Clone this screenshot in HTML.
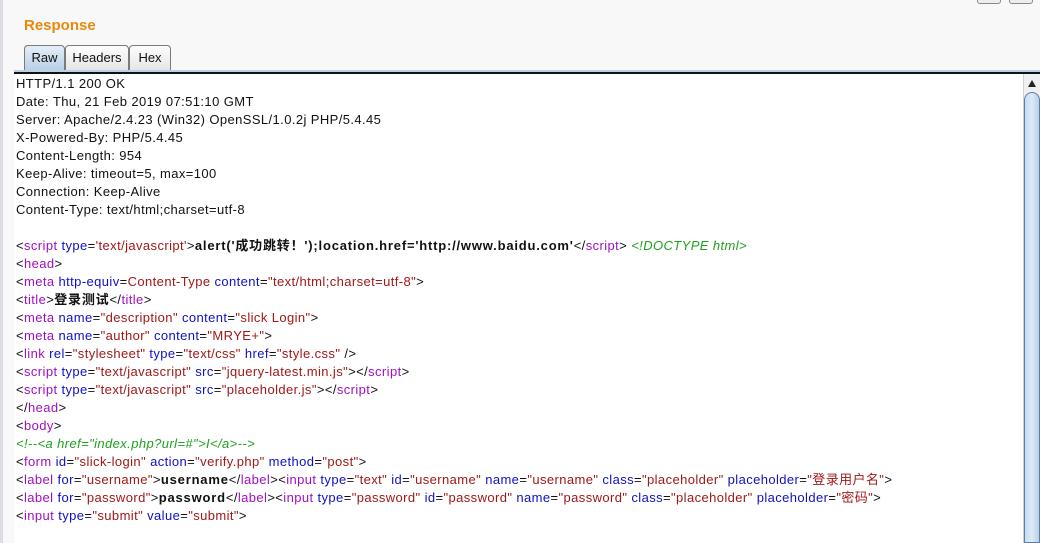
<!DOCTYPE html>
<html><head><meta charset="utf-8"><style>
html,body{margin:0;padding:0;width:1040px;height:543px;overflow:hidden;background:#f8f8f8;font-family:"Liberation Sans","Noto Sans CJK SC",sans-serif;}
.strip{position:absolute;left:0;top:0;width:3px;height:543px;background:#dcdde2;}
.title{position:absolute;left:24px;top:17px;color:#e8890c;font-weight:bold;font-size:15px;}
.tab{position:absolute;top:45px;height:25px;border:1px solid #7a7a7a;border-bottom:none;border-radius:4px 4px 0 0;background:linear-gradient(#fdfdfd,#e6e6e6);font-size:13px;line-height:24px;text-align:center;color:#111;box-sizing:border-box;}
.tab.sel{background:linear-gradient(#e4eef8,#b9d0e6);}
.l1{position:absolute;left:14px;top:70px;width:1026px;height:2px;background:#b8d0e8;}
.l2{position:absolute;left:14px;top:72px;width:1026px;height:2px;background:#111;}
.content{position:absolute;left:14px;top:74px;width:1010px;height:469px;background:#fff;}
pre{margin:0;position:absolute;left:16px;top:75px;font-family:"Liberation Sans","Noto Sans CJK SC",sans-serif;font-size:13px;line-height:18px;color:#111;letter-spacing:0.4px;}
.t{color:#a010c0}.a{color:#1010c8}.v{color:#a01818}.b{font-weight:bold;letter-spacing:0.8px}.c{color:#20a020;font-style:italic}
.sb{position:absolute;left:1023px;top:74px;width:17px;height:469px;background:#f0f0f0;border-left:1px solid #d0d0d0;}
.arrow{position:absolute;left:1028px;top:80px;width:0;height:0;border-left:4px solid transparent;border-right:4px solid transparent;border-bottom:7px solid #222;}
.thumb{position:absolute;left:1024px;top:92px;width:16px;height:451px;background:linear-gradient(90deg,#c8dcef,#ddeaf6,#b7cfe6);border:1px solid #5d7ea8;border-radius:8px 8px 0 0;box-sizing:border-box;}
.btn{position:absolute;top:-5px;width:22px;height:7px;border:1px solid #888;border-radius:3px;background:#eee;}
</style></head><body>
<div class="strip"></div>
<div class="btn" style="left:977px"></div><div class="btn" style="left:1009px"></div>
<div class="title">Response</div>
<div class="tab sel" style="left:24px;width:41px;">Raw</div>
<div class="tab" style="left:65px;width:64px;">Headers</div>
<div class="tab" style="left:129px;width:42px;">Hex</div>
<div class="l1"></div><div class="l2"></div>
<div class="content"></div>
<div class="sb"></div><div class="arrow"></div><div class="thumb"></div>
<pre>HTTP/1.1 200 OK
Date: Thu, 21 Feb 2019 07:51:10 GMT
Server: Apache/2.4.23 (Win32) OpenSSL/1.0.2j PHP/5.4.45
X-Powered-By: PHP/5.4.45
Content-Length: 954
Keep-Alive: timeout=5, max=100
Connection: Keep-Alive
Content-Type: text/html;charset=utf-8

&lt;<span class="t">script</span> <span class="a">type</span>=<span class="v">'text/javascript'</span>&gt;<span class="b">alert('成功跳转！');location.href='http://www.baidu.com'</span>&lt;/<span class="t">script</span>&gt; <span class="c">&lt;!DOCTYPE html&gt;</span>
&lt;<span class="t">head</span>&gt;
&lt;<span class="t">meta</span> <span class="a">http-equiv</span>=<span class="v">Content-Type</span> <span class="a">content</span>=<span class="v">"text/html;charset=utf-8"</span>&gt;
&lt;<span class="t">title</span>&gt;<span class="b">登录测试</span>&lt;/<span class="t">title</span>&gt;
&lt;<span class="t">meta</span> <span class="a">name</span>=<span class="v">"description"</span> <span class="a">content</span>=<span class="v">"slick Login"</span>&gt;
&lt;<span class="t">meta</span> <span class="a">name</span>=<span class="v">"author"</span> <span class="a">content</span>=<span class="v">"MRYE+"</span>&gt;
&lt;<span class="t">link</span> <span class="a">rel</span>=<span class="v">"stylesheet"</span> <span class="a">type</span>=<span class="v">"text/css"</span> <span class="a">href</span>=<span class="v">"style.css"</span> /&gt;
&lt;<span class="t">script</span> <span class="a">type</span>=<span class="v">"text/javascript"</span> <span class="a">src</span>=<span class="v">"jquery-latest.min.js"</span>&gt;&lt;/<span class="t">script</span>&gt;
&lt;<span class="t">script</span> <span class="a">type</span>=<span class="v">"text/javascript"</span> <span class="a">src</span>=<span class="v">"placeholder.js"</span>&gt;&lt;/<span class="t">script</span>&gt;
&lt;/<span class="t">head</span>&gt;
&lt;<span class="t">body</span>&gt;
<span class="c">&lt;!--&lt;a href="index.php?url=#"&gt;I&lt;/a&gt;--&gt;</span>
&lt;<span class="t">form</span> <span class="a">id</span>=<span class="v">"slick-login"</span> <span class="a">action</span>=<span class="v">"verify.php"</span> <span class="a">method</span>=<span class="v">"post"</span>&gt;
&lt;<span class="t">label</span> <span class="a">for</span>=<span class="v">"username"</span>&gt;<span class="b">username</span>&lt;/<span class="t">label</span>&gt;&lt;<span class="t">input</span> <span class="a">type</span>=<span class="v">"text"</span> <span class="a">id</span>=<span class="v">"username"</span> <span class="a">name</span>=<span class="v">"username"</span> <span class="a">class</span>=<span class="v">"placeholder"</span> <span class="a">placeholder</span>=<span class="v">"登录用户名"</span>&gt;
&lt;<span class="t">label</span> <span class="a">for</span>=<span class="v">"password"</span>&gt;<span class="b">password</span>&lt;/<span class="t">label</span>&gt;&lt;<span class="t">input</span> <span class="a">type</span>=<span class="v">"password"</span> <span class="a">id</span>=<span class="v">"password"</span> <span class="a">name</span>=<span class="v">"password"</span> <span class="a">class</span>=<span class="v">"placeholder"</span> <span class="a">placeholder</span>=<span class="v">"密码"</span>&gt;
&lt;<span class="t">input</span> <span class="a">type</span>=<span class="v">"submit"</span> <span class="a">value</span>=<span class="v">"submit"</span>&gt;</pre>
</body></html>
